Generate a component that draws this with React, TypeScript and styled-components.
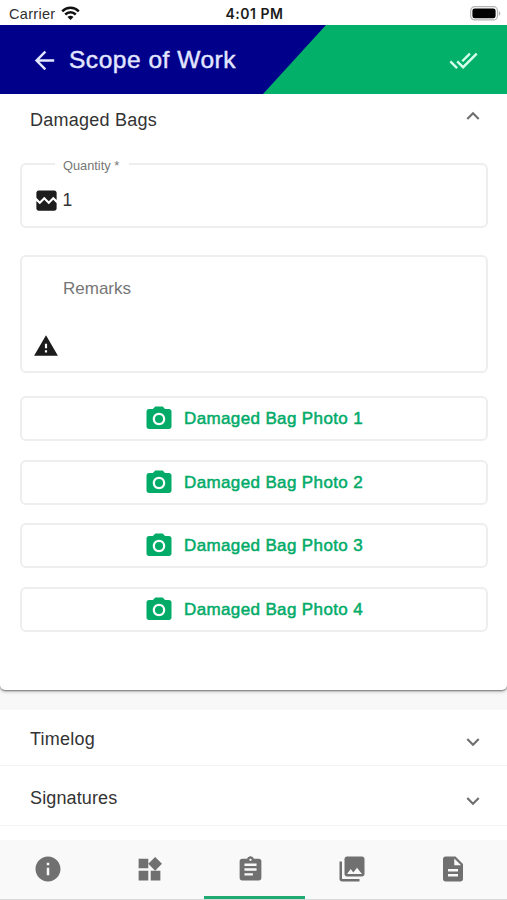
import React from 'react';
import styled, { createGlobalStyle } from 'styled-components';
import {
  MdArrowBack, MdDoneAll, MdExpandLess, MdExpandMore, MdBrokenImage, MdWarning,
  MdCameraAlt, MdInfo, MdWidgets, MdAssignment, MdPhotoLibrary, MdDescription,
} from 'react-icons/md';

const Global = createGlobalStyle`
  * { box-sizing: border-box; }
  body {
    margin: 0;
    background: #fff;
    font-family: "Liberation Sans", Arial, sans-serif;
    color: #333;
    overflow: hidden;
  }
  svg { display: block; flex: none; }
`;

const Screen = styled.div`
  width: 507px;
  height: 900px;
  display: flex;
  flex-direction: column;
  background: #fff;
`;

const StatusBar = styled.div`
  height: 25px;
  flex: none;
  display: grid;
  grid-template-columns: 1fr auto 1fr;
  align-items: center;
  padding: 2px 6px 0 9px;
`;

const Carrier = styled.div`
  display: flex;
  align-items: center;
  gap: 6px;
  font-size: 14.5px;
  letter-spacing: 0.3px;
  color: #303030;
`;

const Clock = styled.div`
  font-family: Inter, sans-serif;
  font-weight: 600;
  font-size: 14px;
  letter-spacing: 0.5px;
  margin-right: 1px;
  color: #1c1c1c;
`;

const BatteryWrap = styled.div`
  justify-self: end;
`;

const Header = styled.header`
  height: 69px;
  flex: none;
  display: flex;
  align-items: center;
  padding: 2px 29px 0 30px;
  color: #e2e6ff;
  background: #02b06a;
  position: relative;
`;

const HeaderBlue = styled.div`
  position: absolute;
  inset: 0 auto 0 0;
  width: 326px;
  background: #00008a;
  clip-path: polygon(0 0, 100% 0, 263px 100%, 0 100%);
`;

const HeaderContent = styled.div`
  position: relative;
  flex: 1;
  display: flex;
  align-items: center;
`;

const Title = styled.h1`
  margin: -1px auto 0 10px;
  font-size: 24.5px;
  font-weight: 400;
  line-height: 30px;
  letter-spacing: 0.52px;
  -webkit-text-stroke: 0.45px currentColor;
`;

const DoneIcon = styled.span`
  color: #d6ffeb;
`;

const Content = styled.main`
  flex: 1;
  min-height: 0;
  background: #f8f8f8;
`;

const OpenPanel = styled.section`
  height: 596px;
  background: #fff;
  border-radius: 0 0 5px 5px;
  box-shadow: 0 1px 2px rgba(0, 0, 0, 0.5), 0 2px 4px rgba(0, 0, 0, 0.13);
  margin-bottom: 20px;
`;

const PanelHeader = styled.div<{ $h: number; $shift: number; $top?: number }>`
  height: ${(p) => p.$h}px;
  display: flex;
  align-items: center;
  justify-content: space-between;
  padding: ${(p) => p.$top ?? 0}px 21px 0 30px;
  font-size: 18px;
  color: #333;
  svg {
    color: #6f6f6f;
    margin-top: ${(p) => p.$shift}px;
  }
`;

const PanelTitle = styled.span<{ $spacing: number }>`
  letter-spacing: ${(p) => p.$spacing}px;
`;

const ClosedPanels = styled.section`
  height: 130px;
  background: #fff;
`;

const ClosedPanel = styled.div`
  border-bottom: 1px solid #f4f4f4;
`;

const Form = styled.div`
  padding: 11px 19px 0 20px;
`;

const Quantity = styled.fieldset`
  margin: 0 0 27px;
  padding: 0 0 0 12px;
  border: 2px solid #eee;
  border-radius: 6px;
  height: 71px;
  min-width: 0;
`;

const Legend = styled.legend`
  margin-left: 21px;
  padding: 0 9px 0 8px;
  height: 14px;
  font-size: 12.8px;
  line-height: 17px;
  color: #777;
  width: 74px;
  white-space: nowrap;
`;

const QuantityRow = styled.div`
  display: flex;
  align-items: center;
  height: 50px;
  padding-top: 9px;
  gap: 3px;
  font-size: 17.5px;
  color: #333;
  margin-left: -1.5px;
  svg { color: #1d1d1d; }
`;

const Remarks = styled.div`
  height: 118px;
  border: 2px solid #eee;
  border-radius: 6px;
  display: flex;
  align-items: flex-end;
  padding: 0 0 12px 11px;
  color: #1b1b1b;
`;

const Placeholder = styled.span`
  align-self: flex-start;
  margin: 21px 0 0 4px;
  font-size: 17px;
  line-height: 22px;
  color: #757575;
`;

const Photos = styled.div`
  margin-top: 23px;
  display: flex;
  flex-direction: column;
  gap: 18.5px;
`;

const PhotoButton = styled.button`
  height: 45px;
  padding: 1px 0 0 122px;
  border: 2px solid #eee;
  border-radius: 6px;
  background: #fff;
  display: flex;
  align-items: center;
  gap: 10px;
  font: 400 17px "Liberation Sans", Arial, sans-serif;
  letter-spacing: 0.37px;
  -webkit-text-stroke: 0.5px currentColor;
  color: #02ab68;
  svg { -webkit-text-stroke: 0; }
`;

const TabBar = styled.nav`
  height: 60px;
  flex: none;
  display: grid;
  grid-template-columns: 102px 101.5px 101.5px 101px 101px;
  background: #f9f9f9;
  border-bottom: 1px solid #d8d8d8;
`;

const Tab = styled.div<{ $active?: boolean; $dx: number }>`
  display: flex;
  align-items: center;
  justify-content: center;
  padding: 0 ${(p) => p.$dx}px 1px 0;
  color: #707070;
  box-shadow: ${(p) => (p.$active ? 'inset 0 -3px 0 #1fab72' : 'none')};
`;

const Wifi = () => (
  <svg width="19" height="15" viewBox="0 0 19 15" fill="none" stroke="#111" strokeWidth="2.5">
    <path d="M1.2 5.3C5.8 .7 13.2 .7 17.8 5.3" />
    <path d="M4.2 8.5c3-2.9 7.6-2.9 10.6 0" />
    <path d="M9.5 13.9 6.5 10.9c1.7-1.6 4.3-1.6 6 0z" fill="#111" stroke="none" />
  </svg>
);

const Battery = () => (
  <svg width="31" height="15" viewBox="0 0 31 15">
    <rect x=".7" y=".7" width="26.8" height="13.2" rx="4" fill="#fff" stroke="#b4b4b4" strokeWidth="1.2" />
    <rect x="2.4" y="2.4" width="23.2" height="9.8" rx="2.3" fill="#000" />
    <path d="M28.8 5c2 .8 2 4 0 4.8z" fill="#b4b4b4" />
  </svg>
);

const photos = [1, 2, 3, 4];
const sections = [
  { name: 'Timelog', spacing: 0.25, height: 55, top: 3 },
  { name: 'Signatures', spacing: 0.12, height: 59, top: 5 },
];

export default function App() {
  return (
    <Screen>
      <Global />
      <StatusBar>
        <Carrier>Carrier <Wifi /></Carrier>
        <Clock>4:01 PM</Clock>
        <BatteryWrap><Battery /></BatteryWrap>
      </StatusBar>
      <Header>
        <HeaderBlue />
        <HeaderContent>
          <MdArrowBack size={29} />
          <Title>Scope of Work</Title>
          <DoneIcon><MdDoneAll size={29} /></DoneIcon>
        </HeaderContent>
      </Header>
      <Content>
        <OpenPanel>
          <PanelHeader $h={52} $shift={-8}>
            <PanelTitle $spacing={0.25}>Damaged Bags</PanelTitle>
            <MdExpandLess size={26} />
          </PanelHeader>
          <Form>
            <Quantity>
              <Legend>Quantity *</Legend>
              <QuantityRow><MdBrokenImage size={27} />1</QuantityRow>
            </Quantity>
            <Remarks>
              <MdWarning size={26} />
              <Placeholder>Remarks</Placeholder>
            </Remarks>
            <Photos>
              {photos.map((n) => (
                <PhotoButton key={n}><MdCameraAlt size={30} />Damaged Bag Photo {n}</PhotoButton>
              ))}
            </Photos>
          </Form>
        </OpenPanel>
        <ClosedPanels>
          {sections.map((s) => (
            <ClosedPanel key={s.name}>
              <PanelHeader $h={s.height} $shift={6} $top={s.top}>
                <PanelTitle $spacing={s.spacing}>{s.name}</PanelTitle>
                <MdExpandMore size={26} />
              </PanelHeader>
            </ClosedPanel>
          ))}
        </ClosedPanels>
      </Content>
      <TabBar>
        <Tab $dx={6}><MdInfo size={30} /></Tab>
        <Tab $dx={6}><MdWidgets size={29} /></Tab>
        <Tab $active $dx={8}><MdAssignment size={29} /></Tab>
        <Tab $dx={8}><MdPhotoLibrary size={30} /></Tab>
        <Tab $dx={7}><MdDescription size={30} /></Tab>
      </TabBar>
    </Screen>
  );
}
